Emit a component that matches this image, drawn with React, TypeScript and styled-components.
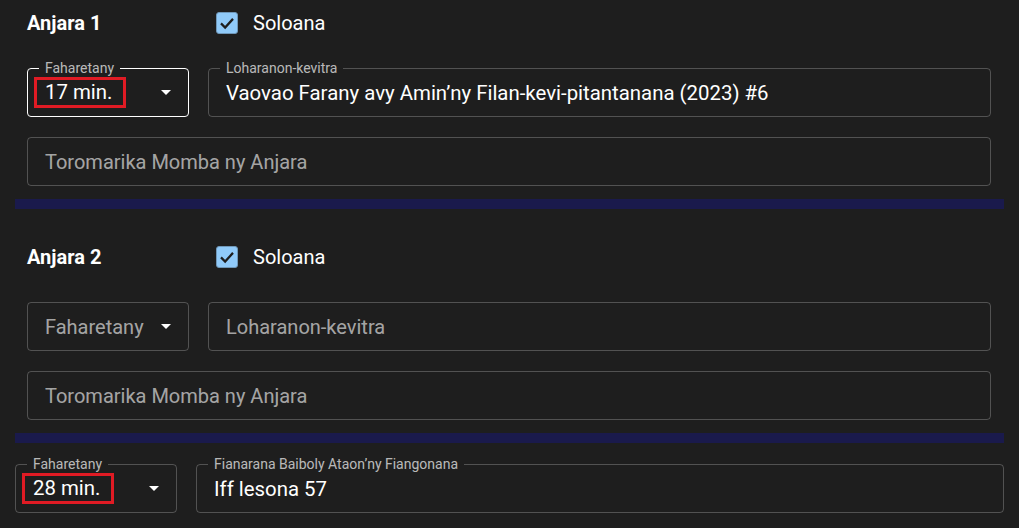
import React from 'react';
import styled, { createGlobalStyle } from 'styled-components';

const GlobalStyle = createGlobalStyle`
  html, body {
    margin: 0;
    padding: 0;
    background: #1e1e1e;
    font-family: Roboto, "Liberation Sans", sans-serif;
    color: #ffffff;
    overflow: hidden;
  }
`;

const Page = styled.main`
  padding: 0 15px;
  width: 1019px;
  height: 528px;
  box-sizing: border-box;
`;

const Section = styled.section`
  padding: 0 13px 0 12px;
  hr + & {
    padding-top: 25px;
  }
`;

const Header = styled.div`
  display: grid;
  grid-template-columns: 162px 1fr;
  column-gap: 19px;
  align-items: center;
  height: 46px;
`;

const Title = styled.h2`
  margin: 0;
  font-size: 20px;
  font-weight: 700;
`;

const CheckLabel = styled.label`
  display: flex;
  align-items: center;
  gap: 15px;
  padding-left: 8px;
  font-size: 20px;
`;

const CheckBox = styled.span`
  width: 22px;
  height: 22px;
  box-sizing: border-box;
  border-radius: 3px;
  border: 1px solid #6f97b8;
  background: #90caf9;
  display: flex;
  align-items: center;
  justify-content: center;
`;

const Row = styled.div<{ $gap?: number }>`
  display: grid;
  grid-template-columns: 162px 1fr;
  column-gap: 19px;
  margin-top: ${({ $gap }) => $gap ?? 20}px;
`;

const Field = styled.div<{ $focused?: boolean; $full?: boolean }>`
  position: relative;
  height: 49px;
  box-sizing: border-box;
  border: 1px solid ${({ $focused }) => ($focused ? '#ffffff' : 'rgba(255, 255, 255, 0.23)')};
  border-radius: 4px;
  display: flex;
  align-items: center;
  justify-content: space-between;
  padding: 0 17px;
  font-size: 20px;
  grid-column: ${({ $full }) => ($full ? '1 / -1' : 'auto')};
`;

const FloatLabel = styled.span`
  position: absolute;
  top: -9px;
  left: 11px;
  padding: 0 6px;
  background: #1e1e1e;
  font-size: 14px;
  line-height: 17px;
  color: rgba(255, 255, 255, 0.7);
  white-space: nowrap;
`;

const Value = styled.span`
  white-space: nowrap;
  color: #ffffff;
  font-size: 20.4px;
`;

const Placeholder = styled.span`
  white-space: nowrap;
  color: rgba(255, 255, 255, 0.62);
`;

const Marked = styled.span`
  display: inline-block;
  border: 3px solid #e01b24;
  padding: 0 11px 1px 8px;
  margin-left: -11px;
  line-height: 24px;
`;

const Divider = styled.hr`
  margin: 13px 0 0;
  border: 0;
  height: 10px;
  background: #1a1a4c;
`;

const ArrowIcon: React.FC = () => (
  <svg width="10" height="5" viewBox="0 0 10 5" style={{ flexShrink: 0 }}>
    <path d="M0 0 L10 0 L5 5 Z" fill="#ffffff" />
  </svg>
);

const Check: React.FC = () => (
  <svg width="18" height="18" viewBox="0 0 24 24">
    <path d="M4 12.5 L9.5 18 L20 6.5" fill="none" stroke="#1e1e1e" strokeWidth="3" />
  </svg>
);

interface Part {
  num: number;
  minutes?: string;
  source?: string;
}

const parts: Part[] = [
  { num: 1, minutes: '17 min.', source: 'Vaovao Farany avy Amin’ny Filan-kevi-pitantanana (2023) #6' },
  { num: 2 },
];

const PartBlock: React.FC<{ part: Part }> = ({ part }) => (
  <Section>
    <Header>
      <Title>{`Anjara ${part.num}`}</Title>
      <CheckLabel>
        <CheckBox>
          <Check />
        </CheckBox>
        Soloana
      </CheckLabel>
    </Header>
    <Row $gap={22}>
      <Field $focused={!!part.minutes}>
        {part.minutes ? (
          <>
            <FloatLabel>Faharetany</FloatLabel>
            <Value>
              <Marked>{part.minutes}</Marked>
            </Value>
          </>
        ) : (
          <Placeholder>Faharetany</Placeholder>
        )}
        <ArrowIcon />
      </Field>
      <Field>
        {part.source ? (
          <>
            <FloatLabel>Loharanon-kevitra</FloatLabel>
            <Value>{part.source}</Value>
          </>
        ) : (
          <Placeholder>Loharanon-kevitra</Placeholder>
        )}
      </Field>
    </Row>
    <Row>
      <Field $full>
        <Placeholder>Toromarika Momba ny Anjara</Placeholder>
      </Field>
    </Row>
  </Section>
);

const App: React.FC = () => (
  <>
    <GlobalStyle />
    <Page>
      {parts.map((p) => (
        <React.Fragment key={p.num}>
          <PartBlock part={p} />
          <Divider />
        </React.Fragment>
      ))}
      <Row $gap={21}>
        <Field>
          <FloatLabel>Faharetany</FloatLabel>
          <Value>
            <Marked>28 min.</Marked>
          </Value>
          <ArrowIcon />
        </Field>
        <Field>
          <FloatLabel>Fianarana Baiboly Ataon’ny Fiangonana</FloatLabel>
          <Value>Iff lesona 57</Value>
        </Field>
      </Row>
    </Page>
  </>
);

export default App;
